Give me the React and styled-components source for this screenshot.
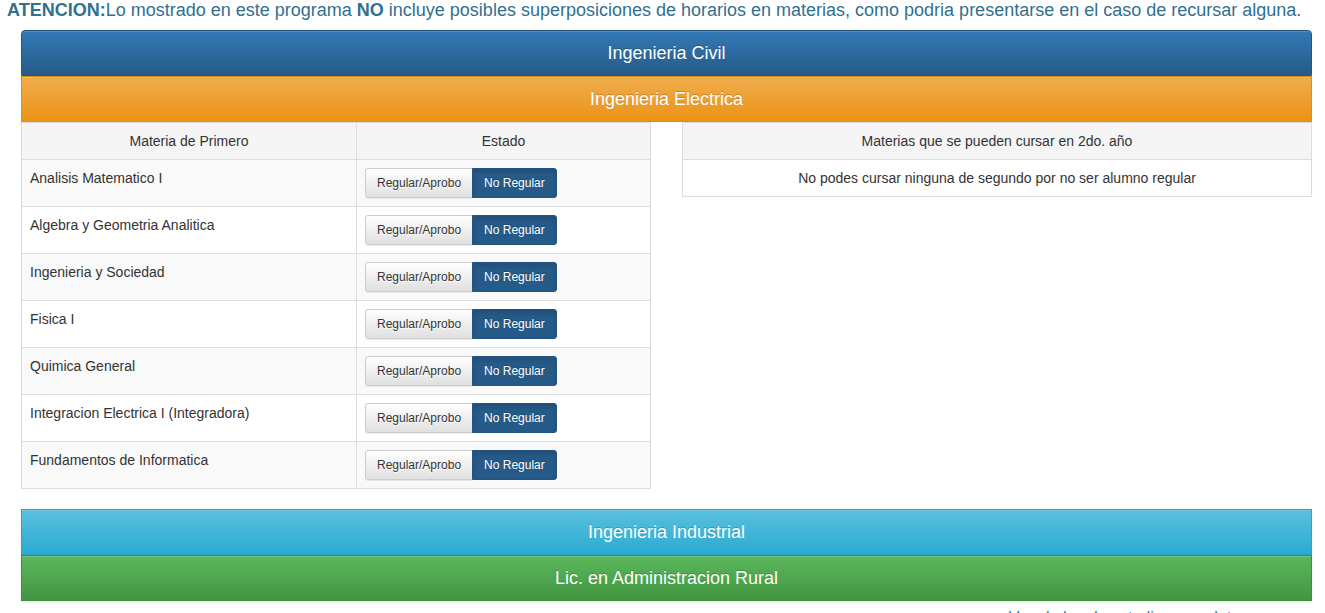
import React from 'react';
import styled, { createGlobalStyle } from 'styled-components';

const GlobalStyle = createGlobalStyle`
  html, body {
    margin: 0;
    padding: 0;
    background: #fff;
  }
  body {
    font-family: "Liberation Sans", Arial, sans-serif;
    font-size: 14px;
    line-height: 1.42857;
    color: #333;
    overflow: hidden;
  }
`;

const materias = [
  'Analisis Matematico I',
  'Algebra y Geometria Analitica',
  'Ingenieria y Sociedad',
  'Fisica I',
  'Quimica General',
  'Integracion Electrica I (Integradora)',
  'Fundamentos de Informatica',
];

const colors = {
  primary: { from: '#337ab7', to: '#265a88', border: '#245580' },
  warning: { from: '#f0ad4e', to: '#eb9316', border: '#e38d13' },
  info: { from: '#5bc0de', to: '#2aabd2', border: '#28a4c9' },
  success: { from: '#5cb85c', to: '#419641', border: '#3e8f3e' },
};

const App = () => {
  return (
    <Page>
      <GlobalStyle />
      <Notice>
        <b>ATENCION:</b>Lo mostrado en este programa <b>NO</b> incluye posibles superposiciones de horarios en materias, como podria presentarse en el caso de recursar alguna.
      </Notice>

      <Accordion>
        <CareerButton kind="primary" first>Ingenieria Civil</CareerButton>
        <CareerButton kind="warning">Ingenieria Electrica</CareerButton>
        <Columns>
          <Col>
            <Table striped>
              <thead>
                <tr>
                  <Th w="335px">Materia de Primero</Th>
                  <Th>Estado</Th>
                </tr>
              </thead>
              <tbody>
                {materias.map((m) => (
                  <tr key={m}>
                    <Td>{m}</Td>
                    <Td>
                      <BtnGroup>
                        <SmallBtn>Regular/Aprobo</SmallBtn>
                        <SmallBtn active>No Regular</SmallBtn>
                      </BtnGroup>
                    </Td>
                  </tr>
                ))}
              </tbody>
            </Table>
          </Col>
          <Col>
            <Table>
              <thead>
                <tr>
                  <Th>Materias que se pueden cursar en 2do. año</Th>
                </tr>
              </thead>
              <tbody>
                <tr>
                  <Td center>No podes cursar ninguna de segundo por no ser alumno regular</Td>
                </tr>
              </tbody>
            </Table>
          </Col>
        </Columns>
      </Accordion>

      <Accordion shadow>
        <CareerButton kind="info">Ingenieria Industrial</CareerButton>
        <CareerButton kind="success">Lic. en Administracion Rural</CareerButton>
      </Accordion>

      <Footer>
        <FooterLink href="#">Ver el plan de estudios completo</FooterLink>
      </Footer>
    </Page>
  );
};

export default App;

const Page = styled.div`
  width: 1325px;
  height: 613px;
  overflow: hidden;
`;

const Notice = styled.p`
  margin: -2px 0 6px 7px;
  font-size: 18px;
  color: #31708f;
  white-space: nowrap;
`;

const Accordion = styled.div`
  margin-left: 21px;
  width: 1291px;
  display: flex;
  flex-direction: column;
  margin-bottom: ${(p) => (p.shadow ? '0' : '20px')};
  box-shadow: ${(p) => (p.shadow ? '0 1px 2px rgba(0,0,0,.08)' : 'none')};
`;

const CareerButton = styled.div`
  height: 46px;
  box-sizing: border-box;
  display: flex;
  align-items: center;
  justify-content: center;
  padding-top: 2px;
  font-size: 18px;
  color: #fff;
  text-shadow: 0 -1px 0 rgba(0, 0, 0, 0.2);
  background-image: linear-gradient(
    to bottom,
    ${(p) => colors[p.kind].from} 0,
    ${(p) => colors[p.kind].to} 100%
  );
  border: 1px solid ${(p) => colors[p.kind].border};
  border-radius: ${(p) => (p.first ? '4px 4px 0 0' : '0')};
  box-shadow: inset 0 1px 0 rgba(255, 255, 255, 0.15);
`;

const Columns = styled.div`
  display: flex;
  align-items: flex-start;
  gap: 31px;
`;

const Col = styled.div`
  width: 630px;
`;

const Table = styled.table`
  width: 100%;
  table-layout: fixed;
  border-collapse: collapse;
  border: 1px solid #ddd;
  font-size: 14px;

  tbody tr:nth-child(odd) {
    background: ${(p) => (p.striped ? '#f9f9f9' : '#fff')};
  }
`;

const Th = styled.th`
  box-sizing: border-box;
  width: ${(p) => p.w || 'auto'};
  font-weight: normal;
  background: #f5f5f5;
  text-align: center;
  padding: 8px;
  line-height: 20px;
  border: 1px solid #ddd;
  border-top: 0;
`;

const Td = styled.td`
  padding: 8px;
  line-height: 20px;
  vertical-align: top;
  border: 1px solid #ddd;
  text-align: ${(p) => (p.center ? 'center' : 'left')};
`;

const BtnGroup = styled.div`
  display: flex;
`;

const SmallBtn = styled.button`
  font-family: inherit;
  font-size: 12px;
  line-height: 18px;
  height: 30px;
  padding: 5px 11px;
  cursor: pointer;
  color: ${(p) => (p.active ? '#fff' : '#333')};
  border: 1px solid ${(p) => (p.active ? '#245580' : '#ccc')};
  background: ${(p) =>
    p.active ? '#265a88' : 'linear-gradient(to bottom, #fff 0, #e0e0e0 100%)'};
  text-shadow: ${(p) =>
    p.active ? '0 -1px 0 rgba(0,0,0,.2)' : '0 1px 0 #fff'};
  box-shadow: ${(p) =>
    p.active
      ? 'inset 0 3px 5px rgba(0,0,0,.125)'
      : 'inset 0 1px 0 rgba(255,255,255,.15), 0 1px 1px rgba(0,0,0,.075)'};
  border-radius: ${(p) => (p.active ? '0 3px 3px 0' : '3px 0 0 3px')};
  margin-left: ${(p) => (p.active ? '-1px' : '0')};
`;

const Footer = styled.div`
  width: 1312px;
  text-align: right;
  padding-top: 6px;
`;

const FooterLink = styled.a`
  display: inline-block;
  margin-right: 72px;
  font-size: 16px;
  color: #337ab7;
  text-decoration: none;
`;
